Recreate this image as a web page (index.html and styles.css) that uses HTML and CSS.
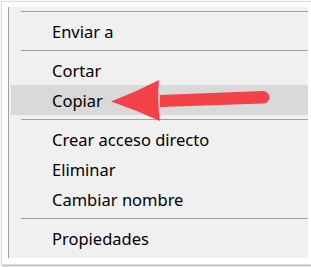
FILE: index.html
```html
<!DOCTYPE html>
<html lang="es">
<head>
<meta charset="utf-8">
<title>Menú contextual</title>
<link rel="stylesheet" href="styles.css">
</head>
<body>
<div class="frame">
  <div class="menu">
    <div class="sep"></div>
    <div class="item">Enviar a</div>
    <div class="sep"></div>
    <div class="item">Cortar</div>
    <div class="item hover">Copiar</div>
    <div class="sep"></div>
    <div class="item">Crear acceso directo</div>
    <div class="item">Eliminar</div>
    <div class="item">Cambiar nombre</div>
    <div class="sep"></div>
    <div class="item">Propiedades</div>
  </div>
</div>
<svg class="arrow" width="311" height="267" viewBox="0 0 311 267">
  <path d="M160 95 L263 91 A6.2 6.2 0 0 1 263.5 103.4 L160 107 Z" fill="#f44249"/>
  <path d="M111 101.5 Q136 92 159 80 Q157 100 160 121 Q136 110 111 101.5 Z" fill="#f44249"/>
</svg>
</body>
</html>
```
FILE: styles.css
```css
html, body {
  margin: 0;
  padding: 0;
  background: #ffffff;
}
body {
  width: 311px;
  height: 267px;
  position: relative;
  overflow: hidden;
  font-family: "Noto Sans", "Open Sans", sans-serif;
}
.frame {
  margin: 1px 0 0 1px;
  width: 300px;
  height: 251px;
  border: 1px solid #dcdcdc;
  padding: 5px 6px 6px 6px;
  background: #ffffff;
  box-shadow: 1px 1px 2px rgba(0, 0, 0, 0.35);
}
.menu {
  height: 251px;
  border-left: 1px solid #a0a0a0;
  background: #f0f0f0;
  box-sizing: border-box;
  padding-bottom: 5px;
}
.sep {
  height: 9px;
  margin-left: 12px;
  display: flex;
  align-items: center;
}
.sep::after {
  content: "";
  flex: 1;
  height: 1px;
  background: #a0a0a0;
}
.item {
  height: 30px;
  margin-left: 2px;
  padding-left: 41px;
  display: flex;
  align-items: center;
  font-size: 16.5px;
  color: #000000;
}
.item.hover {
  background: #d9d9d9;
}
.arrow {
  position: absolute;
  left: 0;
  top: 0;
}
```
